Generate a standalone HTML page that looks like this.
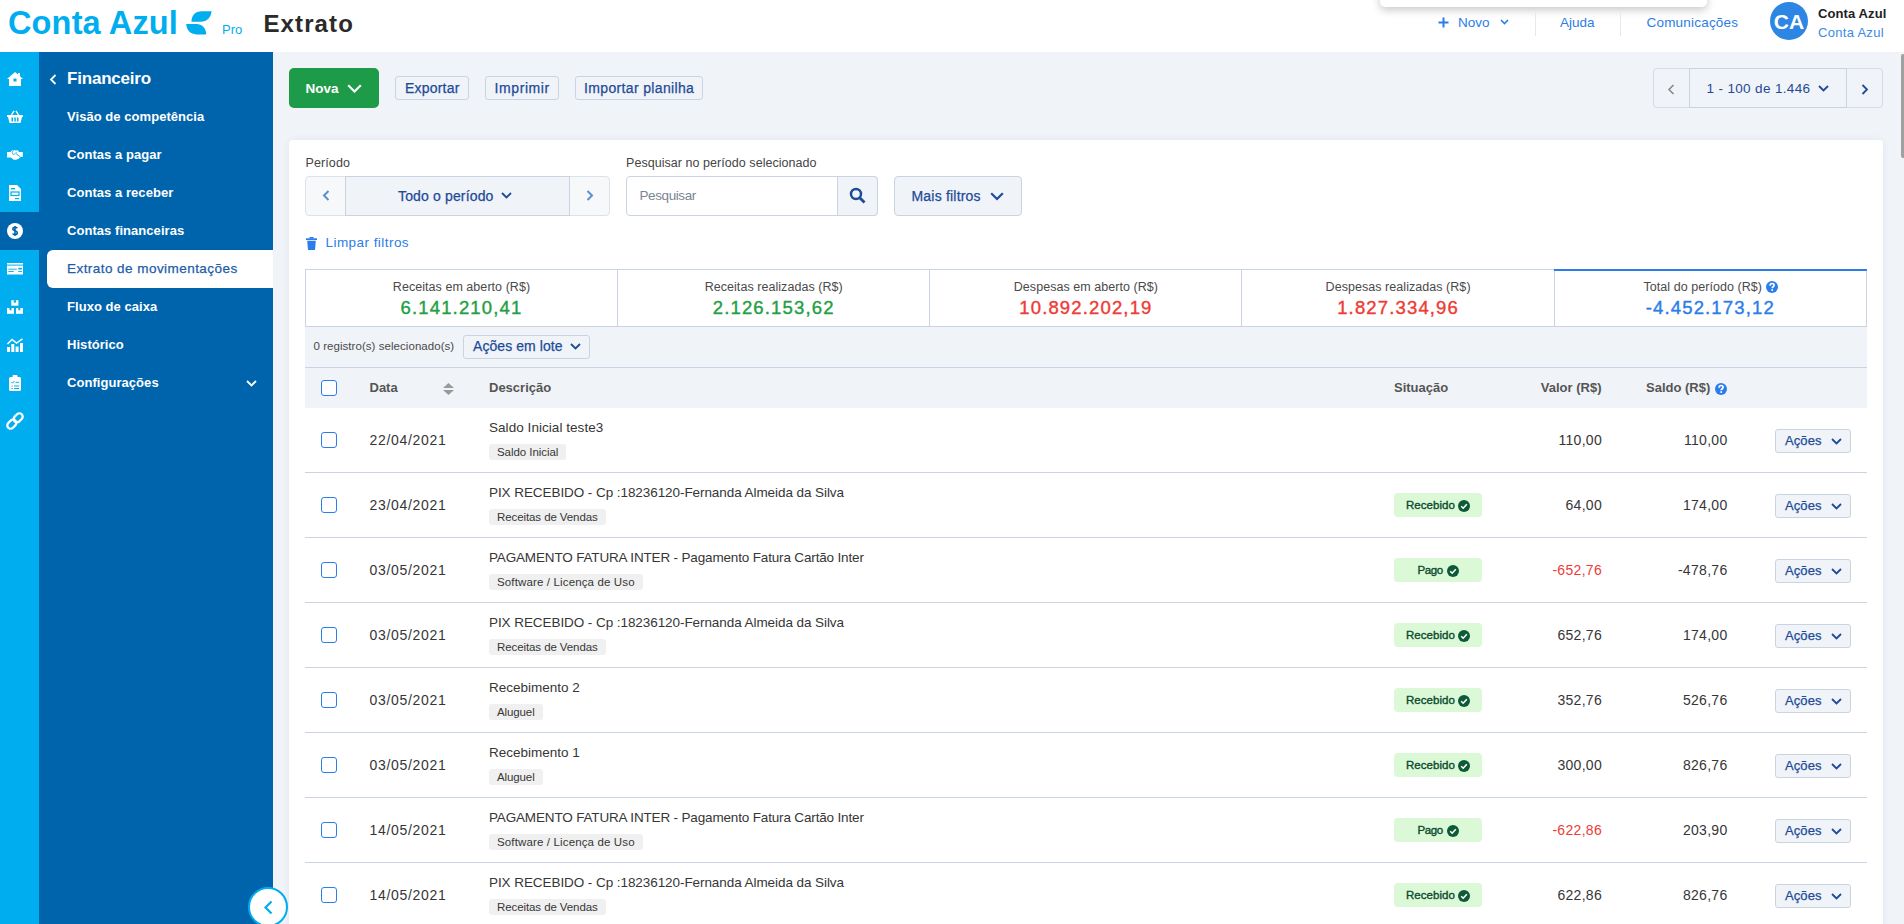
<!DOCTYPE html>
<html><head><meta charset="utf-8"><style>
html,body{margin:0;padding:0;width:1904px;height:924px;overflow:hidden;position:relative;font-family:"Liberation Sans",sans-serif;}
.t{position:absolute;white-space:nowrap;line-height:1;}
svg{overflow:visible}
</style></head><body>
<div style="position:absolute;left:0.00px;top:0.00px;width:1904.00px;height:924.00px;background:#F0F3F8"></div>
<div style="position:absolute;left:0.00px;top:0.00px;width:1904.00px;height:52.00px;background:#fff"></div>
<div class="t" style="left:8.00px;top:7.19px;font-size:32.50px;color:#00AEEF;font-weight:700;letter-spacing:0.15px;">Conta Azul</div>
<svg style="position:absolute;left:0;top:0" width="260" height="52" viewBox="0 0 260 52"><path d="M191.4 21.7 C191.6 15.2 195.5 11.25 201.5 11.25 L211.6 11.25 C211 17.2 207 21.7 200.8 21.7 Z" fill="#00AEEF"/><path d="M186.2 24.1 L196.3 24.1 C202.3 24.1 206.1 28.6 206.2 34.4 L196.4 34.4 C190.5 34.4 186.6 30.2 186.2 24.1 Z" fill="#00AEEF"/></svg>
<div class="t" style="left:222.00px;top:23.00px;font-size:13.00px;color:#00AEEF;font-weight:400;">Pro</div>
<div class="t" style="left:263.50px;top:11.68px;font-size:24.00px;color:#2A2A2A;font-weight:700;letter-spacing:1.10px;">Extrato</div>
<div style="position:absolute;left:1380.00px;top:-10.00px;width:327.00px;height:17.00px;background:#fff;border-radius:0 0 5px 5px;box-shadow:0 3px 8px rgba(0,0,0,0.22)"></div>
<svg style="position:absolute;left:1438.00px;top:17.00px" width="11" height="11" viewBox="0 0 11 11"><path d="M5.5 0.5V10.5M0.5 5.5H10.5" stroke="#2B7DE9" stroke-width="2"/></svg>
<div class="t" style="left:1458.00px;top:16.07px;font-size:13.50px;color:#2B7DE9;font-weight:400;">Novo</div>
<svg style="position:absolute;left:1500.00px;top:19.00px" width="9" height="6" viewBox="0 0 9 6"><path d="M1 1L4.5 4.5L8 1" stroke="#2B7DE9" stroke-width="1.6" fill="none"/></svg>
<div style="position:absolute;left:1535.00px;top:12.00px;width:1.00px;height:24.00px;background:#E4E9F0"></div>
<div class="t" style="left:1560.00px;top:16.07px;font-size:13.50px;color:#2B7DE9;font-weight:400;">Ajuda</div>
<div style="position:absolute;left:1620.00px;top:12.00px;width:1.00px;height:24.00px;background:#E4E9F0"></div>
<div class="t" style="left:1646.50px;top:16.07px;font-size:13.50px;color:#2B7DE9;font-weight:400;letter-spacing:0.20px;">Comunicações</div>
<div style="position:absolute;left:1770.00px;top:2.00px;width:38.00px;height:38.00px;background:#2D86E4;border-radius:50%"></div>
<div class="t" style="left:1759.00px;width:60px;text-align:center;top:11.02px;font-size:21.00px;color:#fff;font-weight:700;">CA</div>
<div class="t" style="left:1818.00px;top:7.00px;font-size:13.00px;color:#222;font-weight:700;letter-spacing:0.10px;">Conta Azul</div>
<div class="t" style="left:1818.00px;top:25.70px;font-size:13.00px;color:#3C8BE6;font-weight:400;letter-spacing:0.30px;">Conta Azul</div>
<div style="position:absolute;left:1901.00px;top:54.00px;width:4.00px;height:104.00px;background:#A0A0A0;border-radius:3px"></div>
<div style="position:absolute;left:0.00px;top:52.00px;width:39.00px;height:872.00px;background:#00AEEF"></div>
<div style="position:absolute;left:0.00px;top:212.00px;width:39.00px;height:38.00px;background:#0064AC"></div>
<svg style="position:absolute;left:7.00px;top:72.00px" width="16" height="14" viewBox="0 0 16 14"><path d="M8 0L0 7H2V14H14V7H16L13 4.3V1H11V2.6Z" fill="#fff"/><rect x="6.5" y="6.5" width="3" height="3" fill="#00AEEF"/></svg>
<svg style="position:absolute;left:7.00px;top:110.00px" width="16" height="13" viewBox="0 0 16 13"><path d="M4.5 5L7 0.8M11.5 5L9 0.8" stroke="#fff" stroke-width="1.4"/><path d="M0 5H16V7H15L13.5 13H2.5L1 7H0Z" fill="#fff"/><rect x="4.5" y="7.5" width="1.5" height="4" fill="#00AEEF"/><rect x="7.3" y="7.5" width="1.5" height="4" fill="#00AEEF"/><rect x="10" y="7.5" width="1.5" height="4" fill="#00AEEF"/></svg>
<svg style="position:absolute;left:4.00px;top:145.00px" width="22" height="20" viewBox="0 0 22 20"><path d="M3 6.9H6.5L7.8 5.4L10.3 5.1L11.2 5.5L13.8 5.2L15.2 6.9H18.8V12.1H16.3L15 13.6L12.2 14.8H9.6L7 12.4H3Z" fill="#fff"/><path d="M9.6 5.4C8.3 6.3 7.9 8.4 8.9 9.2C9.9 9.9 11.4 8.5 12.6 7.2M12 8.7L16.2 11.8" stroke="#00AEEF" stroke-width="0.9" fill="none"/></svg>
<svg style="position:absolute;left:9.00px;top:185.00px" width="12" height="16" viewBox="0 0 12 16"><path d="M0 0H8L12 4V16H0Z" fill="#fff"/><rect x="2" y="3" width="4" height="1.4" fill="#00AEEF"/><rect x="2" y="7" width="8" height="3.5" fill="none" stroke="#00AEEF" stroke-width="1.2"/><rect x="6" y="13" width="4" height="1.2" fill="#00AEEF"/></svg>
<svg style="position:absolute;left:7.00px;top:223.00px" width="16" height="16" viewBox="0 0 16 16"><circle cx="8" cy="8" r="8" fill="#fff"/><path d="M10.3 5.2C9.8 4.5 9 4.2 8 4.2C6.7 4.2 5.8 4.9 5.8 5.9C5.8 8 10.3 7.2 10.3 9.8C10.3 10.9 9.3 11.7 8 11.7C6.9 11.7 6 11.3 5.6 10.5M8 3V13" stroke="#0064AC" stroke-width="1.6" fill="none"/></svg>
<svg style="position:absolute;left:7.00px;top:263.00px" width="16" height="12" viewBox="0 0 16 12"><rect x="0" y="0" width="16" height="11.5" fill="#fff"/><rect x="0" y="1.6" width="16" height="1" fill="#00AEEF"/><rect x="1.3" y="5.7" width="8.5" height="0.9" fill="#00AEEF"/><rect x="1.3" y="8" width="5.5" height="0.9" fill="#00AEEF"/><rect x="11.3" y="4.8" width="3.6" height="1.7" fill="#00AEEF"/><rect x="11.3" y="8" width="3.6" height="0.9" fill="#00AEEF"/></svg>
<svg style="position:absolute;left:7.00px;top:300.00px" width="16" height="14" viewBox="0 0 16 14"><rect x="4.3" y="0.2" width="7.1" height="5.5" fill="#fff"/><rect x="0" y="8" width="7" height="5.8" fill="#fff"/><rect x="9" y="8" width="7" height="5.8" fill="#fff"/><rect x="6.7" y="0.2" width="2.4" height="2.4" fill="#00AEEF"/><rect x="2.5" y="8" width="2" height="2.3" fill="#00AEEF"/><rect x="11.3" y="8" width="2" height="2.3" fill="#00AEEF"/></svg>
<svg style="position:absolute;left:7.00px;top:338.00px" width="16" height="14" viewBox="0 0 16 14"><path d="M0.5 6L5 1.5L9.5 5L15.5 0.8" stroke="#fff" stroke-width="1.5" fill="none"/><rect x="0" y="9" width="3" height="5" fill="#fff"/><rect x="4.3" y="6" width="3" height="8" fill="#fff"/><rect x="8.6" y="8.5" width="3" height="5.5" fill="#fff"/><rect x="13" y="5" width="3" height="9" fill="#fff"/></svg>
<svg style="position:absolute;left:9.00px;top:375.00px" width="12" height="16" viewBox="0 0 12 16"><rect x="0" y="2" width="12" height="14" rx="1.5" fill="#fff"/><rect x="3.5" y="0" width="5" height="3.5" rx="1" fill="#fff"/><path d="M2.5 7L3.6 8.2L5.5 6" stroke="#00AEEF" stroke-width="1" fill="none"/><rect x="6.5" y="6.8" width="3.5" height="1" fill="#00AEEF"/><rect x="2.5" y="10.5" width="1.2" height="1" fill="#00AEEF"/><rect x="5" y="10.5" width="5" height="1" fill="#00AEEF"/><rect x="2.5" y="13" width="1.2" height="1" fill="#00AEEF"/><rect x="5" y="13" width="5" height="1" fill="#00AEEF"/></svg>
<svg style="position:absolute;left:7.00px;top:413.00px" width="16" height="16" viewBox="0 0 16 16"><g transform="rotate(-45 8 8)" fill="none" stroke="#fff" stroke-width="2.3"><rect x="-1.5" y="4.7" width="10" height="6.6" rx="3.3"/><rect x="7.5" y="4.7" width="10" height="6.6" rx="3.3"/></g></svg>
<div style="position:absolute;left:39.00px;top:52.00px;width:234.00px;height:872.00px;background:#0064AC"></div>
<svg style="position:absolute;left:49.00px;top:74.00px" width="8" height="11" viewBox="0 0 8 11"><path d="M6.5 1L2 5.5L6.5 10" stroke="#fff" stroke-width="1.8" fill="none"/></svg>
<div class="t" style="left:67.00px;top:70.01px;font-size:17.00px;color:#fff;font-weight:700;letter-spacing:-0.20px;">Financeiro</div>
<div style="position:absolute;left:47.00px;top:250.00px;width:226.00px;height:38.00px;background:#fff;border-radius:6px 0 0 6px"></div>
<div class="t" style="left:67.00px;top:110.00px;font-size:13.00px;color:#fff;font-weight:700;letter-spacing:0.05px;">Visão de competência</div>
<div class="t" style="left:67.00px;top:148.00px;font-size:13.00px;color:#fff;font-weight:700;letter-spacing:0.05px;">Contas a pagar</div>
<div class="t" style="left:67.00px;top:186.00px;font-size:13.00px;color:#fff;font-weight:700;letter-spacing:0.05px;">Contas a receber</div>
<div class="t" style="left:67.00px;top:224.00px;font-size:13.00px;color:#fff;font-weight:700;letter-spacing:0.05px;">Contas financeiras</div>
<div class="t" style="left:67.00px;top:261.57px;font-size:13.50px;color:#1F5CA8;font-weight:400;letter-spacing:0.45px;-webkit-text-stroke:0.25px #1F5CA8;">Extrato de movimentações</div>
<div class="t" style="left:67.00px;top:300.00px;font-size:13.00px;color:#fff;font-weight:700;letter-spacing:0.05px;">Fluxo de caixa</div>
<div class="t" style="left:67.00px;top:338.00px;font-size:13.00px;color:#fff;font-weight:700;letter-spacing:0.05px;">Histórico</div>
<div class="t" style="left:67.00px;top:376.00px;font-size:13.00px;color:#fff;font-weight:700;letter-spacing:0.05px;">Configurações</div>
<svg style="position:absolute;left:246.00px;top:380.00px" width="11" height="7" viewBox="0 0 11 7"><path d="M1 1L5.5 5.5L10 1" stroke="#fff" stroke-width="1.8" fill="none"/></svg>
<div style="position:absolute;left:248.00px;top:887.00px;width:40.00px;height:40.00px;background:#fff;border:2px solid #00AEEF;border-radius:50%;box-sizing:border-box"></div>
<svg style="position:absolute;left:263.00px;top:900.00px" width="10" height="15" viewBox="0 0 10 15"><path d="M8.5 1.5L2.5 7.5L8.5 13.5" stroke="#00AEEF" stroke-width="2.2" fill="none"/></svg>
<div style="position:absolute;left:289.00px;top:68.00px;width:90.00px;height:40.00px;background:#1E9B48;border-radius:5px"></div>
<div class="t" style="left:305.50px;top:81.57px;font-size:13.50px;color:#fff;font-weight:700;">Nova</div>
<svg style="position:absolute;left:347.00px;top:84.00px" width="15" height="9" viewBox="0 0 15 9"><path d="M1.2 1.2L7.5 7.5L13.8 1.2" stroke="#fff" stroke-width="2.2" fill="none"/></svg>
<div style="position:absolute;left:395.00px;top:76.00px;width:74.00px;height:24.00px;background:#F0F3F8;border:1px solid #CAD4E1;border-radius:3px;box-sizing:border-box"></div>
<div class="t" style="left:405.00px;top:80.65px;font-size:14.00px;color:#1D4B98;font-weight:400;letter-spacing:0.20px;-webkit-text-stroke:0.25px currentColor;">Exportar</div>
<div style="position:absolute;left:485.00px;top:76.00px;width:74.00px;height:24.00px;background:#F0F3F8;border:1px solid #CAD4E1;border-radius:3px;box-sizing:border-box"></div>
<div class="t" style="left:494.50px;top:80.65px;font-size:14.00px;color:#1D4B98;font-weight:400;letter-spacing:0.60px;-webkit-text-stroke:0.25px currentColor;">Imprimir</div>
<div style="position:absolute;left:575.00px;top:76.00px;width:128.00px;height:24.00px;background:#F0F3F8;border:1px solid #CAD4E1;border-radius:3px;box-sizing:border-box"></div>
<div class="t" style="left:584.00px;top:80.65px;font-size:14.00px;color:#1D4B98;font-weight:400;letter-spacing:0.35px;-webkit-text-stroke:0.25px currentColor;">Importar planilha</div>
<div style="position:absolute;left:1653.00px;top:68.00px;width:230.00px;height:40.00px;background:#F0F3F8;border:1px solid #D5DCE6;border-radius:4px;box-sizing:border-box"></div>
<div style="position:absolute;left:1689.00px;top:68.00px;width:158.00px;height:40.00px;border:1px solid #CAD4E1;box-sizing:border-box"></div>
<svg style="position:absolute;left:1667.00px;top:84.00px" width="8" height="11" viewBox="0 0 8 11"><path d="M6.5 1L2 5.5L6.5 10" stroke="#888" stroke-width="1.6" fill="none"/></svg>
<div class="t" style="left:1706.50px;top:82.17px;font-size:13.50px;color:#1D4B98;font-weight:400;letter-spacing:0.35px;">1 - 100 de 1.446</div>
<svg style="position:absolute;left:1818.00px;top:85.00px" width="11" height="7" viewBox="0 0 11 7"><path d="M1 1L5.5 5.5L10 1" stroke="#1D4B98" stroke-width="1.8" fill="none"/></svg>
<svg style="position:absolute;left:1861.00px;top:84.00px" width="8" height="11" viewBox="0 0 8 11"><path d="M1.5 1L6 5.5L1.5 10" stroke="#1D4B98" stroke-width="1.8" fill="none"/></svg>
<div style="position:absolute;left:289.00px;top:140.00px;width:1594.00px;height:860.00px;background:#fff;border-radius:4px;box-shadow:0 0 8px rgba(30,50,90,0.06)"></div>
<div class="t" style="left:305.50px;top:157.12px;font-size:12.50px;color:#444;font-weight:400;letter-spacing:0.10px;">Período</div>
<div class="t" style="left:626.00px;top:157.12px;font-size:12.50px;color:#444;font-weight:400;letter-spacing:0.05px;">Pesquisar no período selecionado</div>
<div style="position:absolute;left:305.00px;top:176.00px;width:305.00px;height:40.00px;background:#F7F8FA;border:1px solid #DCE2EA;border-radius:4px;box-sizing:border-box"></div>
<div style="position:absolute;left:345.00px;top:176.00px;width:225.00px;height:40.00px;background:#F0F3F8;border:1px solid #CAD4E1;box-sizing:border-box"></div>
<svg style="position:absolute;left:322.00px;top:190.00px" width="8" height="11" viewBox="0 0 8 11"><path d="M6.5 1L2 5.5L6.5 10" stroke="#5B8FD1" stroke-width="2" fill="none"/></svg>
<svg style="position:absolute;left:586.00px;top:190.00px" width="8" height="11" viewBox="0 0 8 11"><path d="M1.5 1L6 5.5L1.5 10" stroke="#5B8FD1" stroke-width="2" fill="none"/></svg>
<div class="t" style="left:398.00px;top:188.65px;font-size:14.00px;color:#1D4B98;font-weight:400;letter-spacing:0.15px;-webkit-text-stroke:0.25px currentColor;">Todo o período</div>
<svg style="position:absolute;left:501.00px;top:192.00px" width="11" height="7" viewBox="0 0 11 7"><path d="M1 1L5.5 5.5L10 1" stroke="#1D4B98" stroke-width="1.8" fill="none"/></svg>
<div style="position:absolute;left:626.00px;top:176.00px;width:252.00px;height:40.00px;background:#fff;border:1px solid #CAD4E1;border-radius:4px;box-sizing:border-box"></div>
<div style="position:absolute;left:837.00px;top:176.00px;width:41.00px;height:40.00px;background:#F0F3F8;border:1px solid #CAD4E1;border-radius:0 4px 4px 0;box-sizing:border-box"></div>
<div class="t" style="left:639.50px;top:189.07px;font-size:13.50px;color:#7B8494;font-weight:400;letter-spacing:-0.41px;">Pesquisar</div>
<svg style="position:absolute;left:849.00px;top:187.00px" width="17" height="17" viewBox="0 0 17 17"><circle cx="7" cy="7" r="5" stroke="#1D4B98" stroke-width="2.5" fill="none"/><path d="M10.5 10.5L15.5 15.5" stroke="#1D4B98" stroke-width="2.8"/></svg>
<div style="position:absolute;left:894.00px;top:176.00px;width:128.00px;height:40.00px;background:#F0F3F8;border:1px solid #CAD4E1;border-radius:4px;box-sizing:border-box"></div>
<div class="t" style="left:911.50px;top:189.15px;font-size:14.00px;color:#1D4B98;font-weight:400;letter-spacing:0.20px;-webkit-text-stroke:0.25px currentColor;">Mais filtros</div>
<svg style="position:absolute;left:990.00px;top:192.00px" width="14" height="9" viewBox="0 0 14 9"><path d="M1.2 1.2L7 7L12.8 1.2" stroke="#1D4B98" stroke-width="2.2" fill="none"/></svg>
<svg style="position:absolute;left:306.00px;top:237.00px" width="11" height="13" viewBox="0 0 11 13"><rect x="0" y="1.3" width="11" height="1.7" fill="#2B7DE9"/><rect x="3.5" y="0" width="4" height="1.5" fill="#2B7DE9"/><path d="M1.2 3.8H9.8L9 13H2Z" fill="#2B7DE9"/></svg>
<div class="t" style="left:325.50px;top:235.57px;font-size:13.50px;color:#2B7DE9;font-weight:400;letter-spacing:0.45px;">Limpar filtros</div>
<div style="position:absolute;left:305.00px;top:269.00px;width:1562.00px;height:58.00px;background:#fff;border:1px solid #CAD4E1;box-sizing:border-box"></div>
<div style="position:absolute;left:617.00px;top:269.00px;width:1.00px;height:58.00px;background:#CAD4E1"></div>
<div style="position:absolute;left:929.00px;top:269.00px;width:1.00px;height:58.00px;background:#CAD4E1"></div>
<div style="position:absolute;left:1241.00px;top:269.00px;width:1.00px;height:58.00px;background:#CAD4E1"></div>
<div style="position:absolute;left:1554.00px;top:269.00px;width:1.00px;height:58.00px;background:#CAD4E1"></div>
<div style="position:absolute;left:1554.00px;top:269.00px;width:313.00px;height:2.00px;background:#2B7DE9"></div>
<div class="t" style="left:311.50px;width:300px;text-align:center;top:281.22px;font-size:12.50px;color:#4A4A4A;font-weight:400;letter-spacing:0.05px;">Receitas em aberto (R$)</div>
<div class="t" style="left:311.50px;width:300px;text-align:center;top:298.84px;font-size:18.50px;color:#1FA044;font-weight:400;letter-spacing:1.15px;-webkit-text-stroke:0.4px #1FA044;">6.141.210,41</div>
<div class="t" style="left:623.70px;width:300px;text-align:center;top:281.22px;font-size:12.50px;color:#4A4A4A;font-weight:400;letter-spacing:0.05px;">Receitas realizadas (R$)</div>
<div class="t" style="left:623.70px;width:300px;text-align:center;top:298.84px;font-size:18.50px;color:#1FA044;font-weight:400;letter-spacing:1.15px;-webkit-text-stroke:0.4px #1FA044;">2.126.153,62</div>
<div class="t" style="left:935.90px;width:300px;text-align:center;top:281.22px;font-size:12.50px;color:#4A4A4A;font-weight:400;letter-spacing:0.05px;">Despesas em aberto (R$)</div>
<div class="t" style="left:935.90px;width:300px;text-align:center;top:298.84px;font-size:18.50px;color:#EE3B36;font-weight:400;letter-spacing:1.15px;-webkit-text-stroke:0.4px #EE3B36;">10.892.202,19</div>
<div class="t" style="left:1248.10px;width:300px;text-align:center;top:281.22px;font-size:12.50px;color:#4A4A4A;font-weight:400;letter-spacing:0.05px;">Despesas realizadas (R$)</div>
<div class="t" style="left:1248.10px;width:300px;text-align:center;top:298.84px;font-size:18.50px;color:#EE3B36;font-weight:400;letter-spacing:1.15px;-webkit-text-stroke:0.4px #EE3B36;">1.827.334,96</div>
<div class="t" style="left:1552.80px;width:300px;text-align:center;top:281.22px;font-size:12.50px;color:#4A4A4A;font-weight:400;letter-spacing:0.05px;">Total do período (R$)</div>
<div class="t" style="left:1560.30px;width:300px;text-align:center;top:298.84px;font-size:18.50px;color:#2B7DE9;font-weight:400;letter-spacing:1.15px;-webkit-text-stroke:0.4px #2B7DE9;">-4.452.173,12</div>
<svg style="position:absolute;left:1766.00px;top:280.50px" width="12" height="12" viewBox="0 0 12 12"><circle cx="6" cy="6" r="6" fill="#2B7DE9"/><path d="M4.1 4.7C4.1 3.4 5 2.5 6.1 2.5C7.3 2.5 8.1 3.3 8.1 4.3C8.1 5.7 6.2 5.8 6.2 7.3" stroke="#fff" stroke-width="1.7" fill="none"/><rect x="5.35" y="8.2" width="1.7" height="1.7" fill="#fff"/></svg>
<div style="position:absolute;left:305.00px;top:327.00px;width:1562.00px;height:40.00px;background:#F0F3F8"></div>
<div style="position:absolute;left:305.00px;top:367.00px;width:1562.00px;height:1.00px;background:#CAD4E1"></div>
<div class="t" style="left:313.50px;top:341.27px;font-size:11.50px;color:#4A4A4A;font-weight:400;letter-spacing:0.05px;">0 registro(s) selecionado(s)</div>
<div style="position:absolute;left:463.00px;top:335.00px;width:127.00px;height:24.00px;background:#F0F3F8;border:1px solid #CAD4E1;border-radius:3px;box-sizing:border-box"></div>
<div class="t" style="left:473.00px;top:339.15px;font-size:14.00px;color:#1D4B98;font-weight:400;letter-spacing:0.07px;-webkit-text-stroke:0.25px currentColor;">Ações em lote</div>
<svg style="position:absolute;left:570.00px;top:343.00px" width="11" height="7" viewBox="0 0 11 7"><path d="M1 1L5.5 5.5L10 1" stroke="#1D4B98" stroke-width="1.8" fill="none"/></svg>
<div style="position:absolute;left:305.00px;top:368.00px;width:1562.00px;height:40.00px;background:#F0F3F8"></div>
<div style="position:absolute;left:321.00px;top:380.00px;width:16.00px;height:16.00px;background:#fff;border:1.5px solid #2B7DE9;border-radius:3px;box-sizing:border-box"></div>
<div class="t" style="left:369.50px;top:381.40px;font-size:13.00px;color:#555555;font-weight:700;">Data</div>
<svg style="position:absolute;left:443.00px;top:383.00px" width="11" height="12" viewBox="0 0 11 12"><path d="M5.5 0L11 5H0Z M0 7H11L5.5 12Z" fill="#9A9A9A"/></svg>
<div class="t" style="left:489.00px;top:381.40px;font-size:13.00px;color:#555555;font-weight:700;">Descrição</div>
<div class="t" style="left:1394.00px;top:381.40px;font-size:13.00px;color:#555555;font-weight:700;">Situação</div>
<div class="t" style="left:1401.50px;width:200px;text-align:right;top:381.40px;font-size:13.00px;color:#555555;font-weight:700;">Valor (R$)</div>
<div class="t" style="left:1646.00px;top:381.40px;font-size:13.00px;color:#555555;font-weight:700;">Saldo (R$)</div>
<svg style="position:absolute;left:1715.00px;top:383.00px" width="12" height="12" viewBox="0 0 12 12"><circle cx="6" cy="6" r="6" fill="#2B7DE9"/><path d="M4.1 4.7C4.1 3.4 5 2.5 6.1 2.5C7.3 2.5 8.1 3.3 8.1 4.3C8.1 5.7 6.2 5.8 6.2 7.3" stroke="#fff" stroke-width="1.7" fill="none"/><rect x="5.35" y="8.2" width="1.7" height="1.7" fill="#fff"/></svg>
<div style="position:absolute;left:305.00px;top:472.00px;width:1562.00px;height:1.00px;background:#CAD4E1"></div>
<div style="position:absolute;left:321.00px;top:432.00px;width:16.00px;height:16.00px;background:#fff;border:1.5px solid #2B7DE9;border-radius:3px;box-sizing:border-box"></div>
<div class="t" style="left:369.50px;top:432.65px;font-size:14.00px;color:#363636;font-weight:400;letter-spacing:0.70px;">22/04/2021</div>
<div class="t" style="left:489.00px;top:420.57px;font-size:13.50px;color:#363636;font-weight:400;letter-spacing:0.05px;">Saldo Inicial teste3</div>
<div style="position:absolute;left:489.00px;top:444.00px;width:77.40px;height:16.00px;background:#F0F0F0;border-radius:3px"></div>
<div class="t" style="left:497.00px;top:446.87px;font-size:11.50px;color:#363636;font-weight:400;letter-spacing:-0.05px;">Saldo Inicial</div>
<div class="t" style="left:1402.00px;width:200px;text-align:right;top:432.65px;font-size:14.00px;color:#363636;font-weight:400;letter-spacing:0.30px;">110,00</div>
<div class="t" style="left:1527.50px;width:200px;text-align:right;top:432.65px;font-size:14.00px;color:#363636;font-weight:400;letter-spacing:0.30px;">110,00</div>
<div style="position:absolute;left:1775.00px;top:429.00px;width:76.00px;height:24.00px;background:#F0F3F8;border:1px solid #CAD4E1;border-radius:3px;box-sizing:border-box"></div>
<div class="t" style="left:1785.00px;top:434.00px;font-size:13.00px;color:#1D4B98;font-weight:400;letter-spacing:0.10px;-webkit-text-stroke:0.25px currentColor;">Ações</div>
<svg style="position:absolute;left:1830.50px;top:437.50px" width="11" height="7" viewBox="0 0 11 7"><path d="M1 1L5.5 5.5L10 1" stroke="#1D4B98" stroke-width="1.8" fill="none"/></svg>
<div style="position:absolute;left:305.00px;top:537.00px;width:1562.00px;height:1.00px;background:#CAD4E1"></div>
<div style="position:absolute;left:321.00px;top:497.00px;width:16.00px;height:16.00px;background:#fff;border:1.5px solid #2B7DE9;border-radius:3px;box-sizing:border-box"></div>
<div class="t" style="left:369.50px;top:497.65px;font-size:14.00px;color:#363636;font-weight:400;letter-spacing:0.70px;">23/04/2021</div>
<div class="t" style="left:489.00px;top:485.57px;font-size:13.50px;color:#363636;font-weight:400;letter-spacing:-0.07px;">PIX RECEBIDO - Cp :18236120-Fernanda Almeida da Silva</div>
<div style="position:absolute;left:489.00px;top:509.00px;width:116.80px;height:16.00px;background:#F0F0F0;border-radius:3px"></div>
<div class="t" style="left:497.00px;top:511.87px;font-size:11.50px;color:#363636;font-weight:400;letter-spacing:-0.09px;">Receitas de Vendas</div>
<div style="position:absolute;left:1394.00px;top:493.00px;width:88.00px;height:24.00px;background:#DBF9D6;border-radius:4px"></div>
<div class="t" style="left:1406.00px;top:499.57px;font-size:11.50px;color:#0B4A2E;font-weight:400;letter-spacing:0.03px;-webkit-text-stroke:0.35px #0B4A2E;">Recebido</div>
<svg style="position:absolute;left:1458.40px;top:500.00px" width="12" height="12" viewBox="0 0 12 12"><circle cx="6" cy="6" r="6" fill="#0E5A38"/><path d="M3.2 6.2L5.2 8.2L8.8 4.2" stroke="#fff" stroke-width="1.6" fill="none"/></svg>
<div class="t" style="left:1402.00px;width:200px;text-align:right;top:497.65px;font-size:14.00px;color:#363636;font-weight:400;letter-spacing:0.30px;">64,00</div>
<div class="t" style="left:1527.50px;width:200px;text-align:right;top:497.65px;font-size:14.00px;color:#363636;font-weight:400;letter-spacing:0.30px;">174,00</div>
<div style="position:absolute;left:1775.00px;top:494.00px;width:76.00px;height:24.00px;background:#F0F3F8;border:1px solid #CAD4E1;border-radius:3px;box-sizing:border-box"></div>
<div class="t" style="left:1785.00px;top:499.00px;font-size:13.00px;color:#1D4B98;font-weight:400;letter-spacing:0.10px;-webkit-text-stroke:0.25px currentColor;">Ações</div>
<svg style="position:absolute;left:1830.50px;top:502.50px" width="11" height="7" viewBox="0 0 11 7"><path d="M1 1L5.5 5.5L10 1" stroke="#1D4B98" stroke-width="1.8" fill="none"/></svg>
<div style="position:absolute;left:305.00px;top:602.00px;width:1562.00px;height:1.00px;background:#CAD4E1"></div>
<div style="position:absolute;left:321.00px;top:562.00px;width:16.00px;height:16.00px;background:#fff;border:1.5px solid #2B7DE9;border-radius:3px;box-sizing:border-box"></div>
<div class="t" style="left:369.50px;top:562.65px;font-size:14.00px;color:#363636;font-weight:400;letter-spacing:0.70px;">03/05/2021</div>
<div class="t" style="left:489.00px;top:550.57px;font-size:13.50px;color:#363636;font-weight:400;letter-spacing:-0.16px;">PAGAMENTO FATURA INTER - Pagamento Fatura Cartão Inter</div>
<div style="position:absolute;left:489.00px;top:574.00px;width:153.70px;height:16.00px;background:#F0F0F0;border-radius:3px"></div>
<div class="t" style="left:497.00px;top:576.87px;font-size:11.50px;color:#363636;font-weight:400;letter-spacing:0.14px;">Software / Licença de Uso</div>
<div style="position:absolute;left:1394.00px;top:558.00px;width:88.00px;height:24.00px;background:#DBF9D6;border-radius:4px"></div>
<div class="t" style="left:1417.50px;top:564.57px;font-size:11.50px;color:#0B4A2E;font-weight:400;letter-spacing:-0.38px;-webkit-text-stroke:0.35px #0B4A2E;">Pago</div>
<svg style="position:absolute;left:1447.40px;top:565.00px" width="12" height="12" viewBox="0 0 12 12"><circle cx="6" cy="6" r="6" fill="#0E5A38"/><path d="M3.2 6.2L5.2 8.2L8.8 4.2" stroke="#fff" stroke-width="1.6" fill="none"/></svg>
<div class="t" style="left:1402.00px;width:200px;text-align:right;top:562.65px;font-size:14.00px;color:#EE3B36;font-weight:400;letter-spacing:0.30px;">-652,76</div>
<div class="t" style="left:1527.50px;width:200px;text-align:right;top:562.65px;font-size:14.00px;color:#363636;font-weight:400;letter-spacing:0.30px;">-478,76</div>
<div style="position:absolute;left:1775.00px;top:559.00px;width:76.00px;height:24.00px;background:#F0F3F8;border:1px solid #CAD4E1;border-radius:3px;box-sizing:border-box"></div>
<div class="t" style="left:1785.00px;top:564.00px;font-size:13.00px;color:#1D4B98;font-weight:400;letter-spacing:0.10px;-webkit-text-stroke:0.25px currentColor;">Ações</div>
<svg style="position:absolute;left:1830.50px;top:567.50px" width="11" height="7" viewBox="0 0 11 7"><path d="M1 1L5.5 5.5L10 1" stroke="#1D4B98" stroke-width="1.8" fill="none"/></svg>
<div style="position:absolute;left:305.00px;top:667.00px;width:1562.00px;height:1.00px;background:#CAD4E1"></div>
<div style="position:absolute;left:321.00px;top:627.00px;width:16.00px;height:16.00px;background:#fff;border:1.5px solid #2B7DE9;border-radius:3px;box-sizing:border-box"></div>
<div class="t" style="left:369.50px;top:627.65px;font-size:14.00px;color:#363636;font-weight:400;letter-spacing:0.70px;">03/05/2021</div>
<div class="t" style="left:489.00px;top:615.57px;font-size:13.50px;color:#363636;font-weight:400;letter-spacing:-0.07px;">PIX RECEBIDO - Cp :18236120-Fernanda Almeida da Silva</div>
<div style="position:absolute;left:489.00px;top:639.00px;width:116.80px;height:16.00px;background:#F0F0F0;border-radius:3px"></div>
<div class="t" style="left:497.00px;top:641.87px;font-size:11.50px;color:#363636;font-weight:400;letter-spacing:-0.09px;">Receitas de Vendas</div>
<div style="position:absolute;left:1394.00px;top:623.00px;width:88.00px;height:24.00px;background:#DBF9D6;border-radius:4px"></div>
<div class="t" style="left:1406.00px;top:629.57px;font-size:11.50px;color:#0B4A2E;font-weight:400;letter-spacing:0.03px;-webkit-text-stroke:0.35px #0B4A2E;">Recebido</div>
<svg style="position:absolute;left:1458.40px;top:630.00px" width="12" height="12" viewBox="0 0 12 12"><circle cx="6" cy="6" r="6" fill="#0E5A38"/><path d="M3.2 6.2L5.2 8.2L8.8 4.2" stroke="#fff" stroke-width="1.6" fill="none"/></svg>
<div class="t" style="left:1402.00px;width:200px;text-align:right;top:627.65px;font-size:14.00px;color:#363636;font-weight:400;letter-spacing:0.30px;">652,76</div>
<div class="t" style="left:1527.50px;width:200px;text-align:right;top:627.65px;font-size:14.00px;color:#363636;font-weight:400;letter-spacing:0.30px;">174,00</div>
<div style="position:absolute;left:1775.00px;top:624.00px;width:76.00px;height:24.00px;background:#F0F3F8;border:1px solid #CAD4E1;border-radius:3px;box-sizing:border-box"></div>
<div class="t" style="left:1785.00px;top:629.00px;font-size:13.00px;color:#1D4B98;font-weight:400;letter-spacing:0.10px;-webkit-text-stroke:0.25px currentColor;">Ações</div>
<svg style="position:absolute;left:1830.50px;top:632.50px" width="11" height="7" viewBox="0 0 11 7"><path d="M1 1L5.5 5.5L10 1" stroke="#1D4B98" stroke-width="1.8" fill="none"/></svg>
<div style="position:absolute;left:305.00px;top:732.00px;width:1562.00px;height:1.00px;background:#CAD4E1"></div>
<div style="position:absolute;left:321.00px;top:692.00px;width:16.00px;height:16.00px;background:#fff;border:1.5px solid #2B7DE9;border-radius:3px;box-sizing:border-box"></div>
<div class="t" style="left:369.50px;top:692.65px;font-size:14.00px;color:#363636;font-weight:400;letter-spacing:0.70px;">03/05/2021</div>
<div class="t" style="left:489.00px;top:680.57px;font-size:13.50px;color:#363636;font-weight:400;letter-spacing:-0.01px;">Recebimento 2</div>
<div style="position:absolute;left:489.00px;top:704.00px;width:53.70px;height:16.00px;background:#F0F0F0;border-radius:3px"></div>
<div class="t" style="left:497.00px;top:706.87px;font-size:11.50px;color:#363636;font-weight:400;letter-spacing:-0.11px;">Aluguel</div>
<div style="position:absolute;left:1394.00px;top:688.00px;width:88.00px;height:24.00px;background:#DBF9D6;border-radius:4px"></div>
<div class="t" style="left:1406.00px;top:694.57px;font-size:11.50px;color:#0B4A2E;font-weight:400;letter-spacing:0.03px;-webkit-text-stroke:0.35px #0B4A2E;">Recebido</div>
<svg style="position:absolute;left:1458.40px;top:695.00px" width="12" height="12" viewBox="0 0 12 12"><circle cx="6" cy="6" r="6" fill="#0E5A38"/><path d="M3.2 6.2L5.2 8.2L8.8 4.2" stroke="#fff" stroke-width="1.6" fill="none"/></svg>
<div class="t" style="left:1402.00px;width:200px;text-align:right;top:692.65px;font-size:14.00px;color:#363636;font-weight:400;letter-spacing:0.30px;">352,76</div>
<div class="t" style="left:1527.50px;width:200px;text-align:right;top:692.65px;font-size:14.00px;color:#363636;font-weight:400;letter-spacing:0.30px;">526,76</div>
<div style="position:absolute;left:1775.00px;top:689.00px;width:76.00px;height:24.00px;background:#F0F3F8;border:1px solid #CAD4E1;border-radius:3px;box-sizing:border-box"></div>
<div class="t" style="left:1785.00px;top:694.00px;font-size:13.00px;color:#1D4B98;font-weight:400;letter-spacing:0.10px;-webkit-text-stroke:0.25px currentColor;">Ações</div>
<svg style="position:absolute;left:1830.50px;top:697.50px" width="11" height="7" viewBox="0 0 11 7"><path d="M1 1L5.5 5.5L10 1" stroke="#1D4B98" stroke-width="1.8" fill="none"/></svg>
<div style="position:absolute;left:305.00px;top:797.00px;width:1562.00px;height:1.00px;background:#CAD4E1"></div>
<div style="position:absolute;left:321.00px;top:757.00px;width:16.00px;height:16.00px;background:#fff;border:1.5px solid #2B7DE9;border-radius:3px;box-sizing:border-box"></div>
<div class="t" style="left:369.50px;top:757.65px;font-size:14.00px;color:#363636;font-weight:400;letter-spacing:0.70px;">03/05/2021</div>
<div class="t" style="left:489.00px;top:745.57px;font-size:13.50px;color:#363636;font-weight:400;letter-spacing:-0.01px;">Recebimento 1</div>
<div style="position:absolute;left:489.00px;top:769.00px;width:53.70px;height:16.00px;background:#F0F0F0;border-radius:3px"></div>
<div class="t" style="left:497.00px;top:771.87px;font-size:11.50px;color:#363636;font-weight:400;letter-spacing:-0.11px;">Aluguel</div>
<div style="position:absolute;left:1394.00px;top:753.00px;width:88.00px;height:24.00px;background:#DBF9D6;border-radius:4px"></div>
<div class="t" style="left:1406.00px;top:759.57px;font-size:11.50px;color:#0B4A2E;font-weight:400;letter-spacing:0.03px;-webkit-text-stroke:0.35px #0B4A2E;">Recebido</div>
<svg style="position:absolute;left:1458.40px;top:760.00px" width="12" height="12" viewBox="0 0 12 12"><circle cx="6" cy="6" r="6" fill="#0E5A38"/><path d="M3.2 6.2L5.2 8.2L8.8 4.2" stroke="#fff" stroke-width="1.6" fill="none"/></svg>
<div class="t" style="left:1402.00px;width:200px;text-align:right;top:757.65px;font-size:14.00px;color:#363636;font-weight:400;letter-spacing:0.30px;">300,00</div>
<div class="t" style="left:1527.50px;width:200px;text-align:right;top:757.65px;font-size:14.00px;color:#363636;font-weight:400;letter-spacing:0.30px;">826,76</div>
<div style="position:absolute;left:1775.00px;top:754.00px;width:76.00px;height:24.00px;background:#F0F3F8;border:1px solid #CAD4E1;border-radius:3px;box-sizing:border-box"></div>
<div class="t" style="left:1785.00px;top:759.00px;font-size:13.00px;color:#1D4B98;font-weight:400;letter-spacing:0.10px;-webkit-text-stroke:0.25px currentColor;">Ações</div>
<svg style="position:absolute;left:1830.50px;top:762.50px" width="11" height="7" viewBox="0 0 11 7"><path d="M1 1L5.5 5.5L10 1" stroke="#1D4B98" stroke-width="1.8" fill="none"/></svg>
<div style="position:absolute;left:305.00px;top:862.00px;width:1562.00px;height:1.00px;background:#CAD4E1"></div>
<div style="position:absolute;left:321.00px;top:822.00px;width:16.00px;height:16.00px;background:#fff;border:1.5px solid #2B7DE9;border-radius:3px;box-sizing:border-box"></div>
<div class="t" style="left:369.50px;top:822.65px;font-size:14.00px;color:#363636;font-weight:400;letter-spacing:0.70px;">14/05/2021</div>
<div class="t" style="left:489.00px;top:810.57px;font-size:13.50px;color:#363636;font-weight:400;letter-spacing:-0.16px;">PAGAMENTO FATURA INTER - Pagamento Fatura Cartão Inter</div>
<div style="position:absolute;left:489.00px;top:834.00px;width:153.70px;height:16.00px;background:#F0F0F0;border-radius:3px"></div>
<div class="t" style="left:497.00px;top:836.87px;font-size:11.50px;color:#363636;font-weight:400;letter-spacing:0.14px;">Software / Licença de Uso</div>
<div style="position:absolute;left:1394.00px;top:818.00px;width:88.00px;height:24.00px;background:#DBF9D6;border-radius:4px"></div>
<div class="t" style="left:1417.50px;top:824.57px;font-size:11.50px;color:#0B4A2E;font-weight:400;letter-spacing:-0.38px;-webkit-text-stroke:0.35px #0B4A2E;">Pago</div>
<svg style="position:absolute;left:1447.40px;top:825.00px" width="12" height="12" viewBox="0 0 12 12"><circle cx="6" cy="6" r="6" fill="#0E5A38"/><path d="M3.2 6.2L5.2 8.2L8.8 4.2" stroke="#fff" stroke-width="1.6" fill="none"/></svg>
<div class="t" style="left:1402.00px;width:200px;text-align:right;top:822.65px;font-size:14.00px;color:#EE3B36;font-weight:400;letter-spacing:0.30px;">-622,86</div>
<div class="t" style="left:1527.50px;width:200px;text-align:right;top:822.65px;font-size:14.00px;color:#363636;font-weight:400;letter-spacing:0.30px;">203,90</div>
<div style="position:absolute;left:1775.00px;top:819.00px;width:76.00px;height:24.00px;background:#F0F3F8;border:1px solid #CAD4E1;border-radius:3px;box-sizing:border-box"></div>
<div class="t" style="left:1785.00px;top:824.00px;font-size:13.00px;color:#1D4B98;font-weight:400;letter-spacing:0.10px;-webkit-text-stroke:0.25px currentColor;">Ações</div>
<svg style="position:absolute;left:1830.50px;top:827.50px" width="11" height="7" viewBox="0 0 11 7"><path d="M1 1L5.5 5.5L10 1" stroke="#1D4B98" stroke-width="1.8" fill="none"/></svg>
<div style="position:absolute;left:305.00px;top:927.00px;width:1562.00px;height:1.00px;background:#CAD4E1"></div>
<div style="position:absolute;left:321.00px;top:887.00px;width:16.00px;height:16.00px;background:#fff;border:1.5px solid #2B7DE9;border-radius:3px;box-sizing:border-box"></div>
<div class="t" style="left:369.50px;top:887.65px;font-size:14.00px;color:#363636;font-weight:400;letter-spacing:0.70px;">14/05/2021</div>
<div class="t" style="left:489.00px;top:875.57px;font-size:13.50px;color:#363636;font-weight:400;letter-spacing:-0.07px;">PIX RECEBIDO - Cp :18236120-Fernanda Almeida da Silva</div>
<div style="position:absolute;left:489.00px;top:899.00px;width:116.80px;height:16.00px;background:#F0F0F0;border-radius:3px"></div>
<div class="t" style="left:497.00px;top:901.87px;font-size:11.50px;color:#363636;font-weight:400;letter-spacing:-0.09px;">Receitas de Vendas</div>
<div style="position:absolute;left:1394.00px;top:883.00px;width:88.00px;height:24.00px;background:#DBF9D6;border-radius:4px"></div>
<div class="t" style="left:1406.00px;top:889.57px;font-size:11.50px;color:#0B4A2E;font-weight:400;letter-spacing:0.03px;-webkit-text-stroke:0.35px #0B4A2E;">Recebido</div>
<svg style="position:absolute;left:1458.40px;top:890.00px" width="12" height="12" viewBox="0 0 12 12"><circle cx="6" cy="6" r="6" fill="#0E5A38"/><path d="M3.2 6.2L5.2 8.2L8.8 4.2" stroke="#fff" stroke-width="1.6" fill="none"/></svg>
<div class="t" style="left:1402.00px;width:200px;text-align:right;top:887.65px;font-size:14.00px;color:#363636;font-weight:400;letter-spacing:0.30px;">622,86</div>
<div class="t" style="left:1527.50px;width:200px;text-align:right;top:887.65px;font-size:14.00px;color:#363636;font-weight:400;letter-spacing:0.30px;">826,76</div>
<div style="position:absolute;left:1775.00px;top:884.00px;width:76.00px;height:24.00px;background:#F0F3F8;border:1px solid #CAD4E1;border-radius:3px;box-sizing:border-box"></div>
<div class="t" style="left:1785.00px;top:889.00px;font-size:13.00px;color:#1D4B98;font-weight:400;letter-spacing:0.10px;-webkit-text-stroke:0.25px currentColor;">Ações</div>
<svg style="position:absolute;left:1830.50px;top:892.50px" width="11" height="7" viewBox="0 0 11 7"><path d="M1 1L5.5 5.5L10 1" stroke="#1D4B98" stroke-width="1.8" fill="none"/></svg>
</body></html>
